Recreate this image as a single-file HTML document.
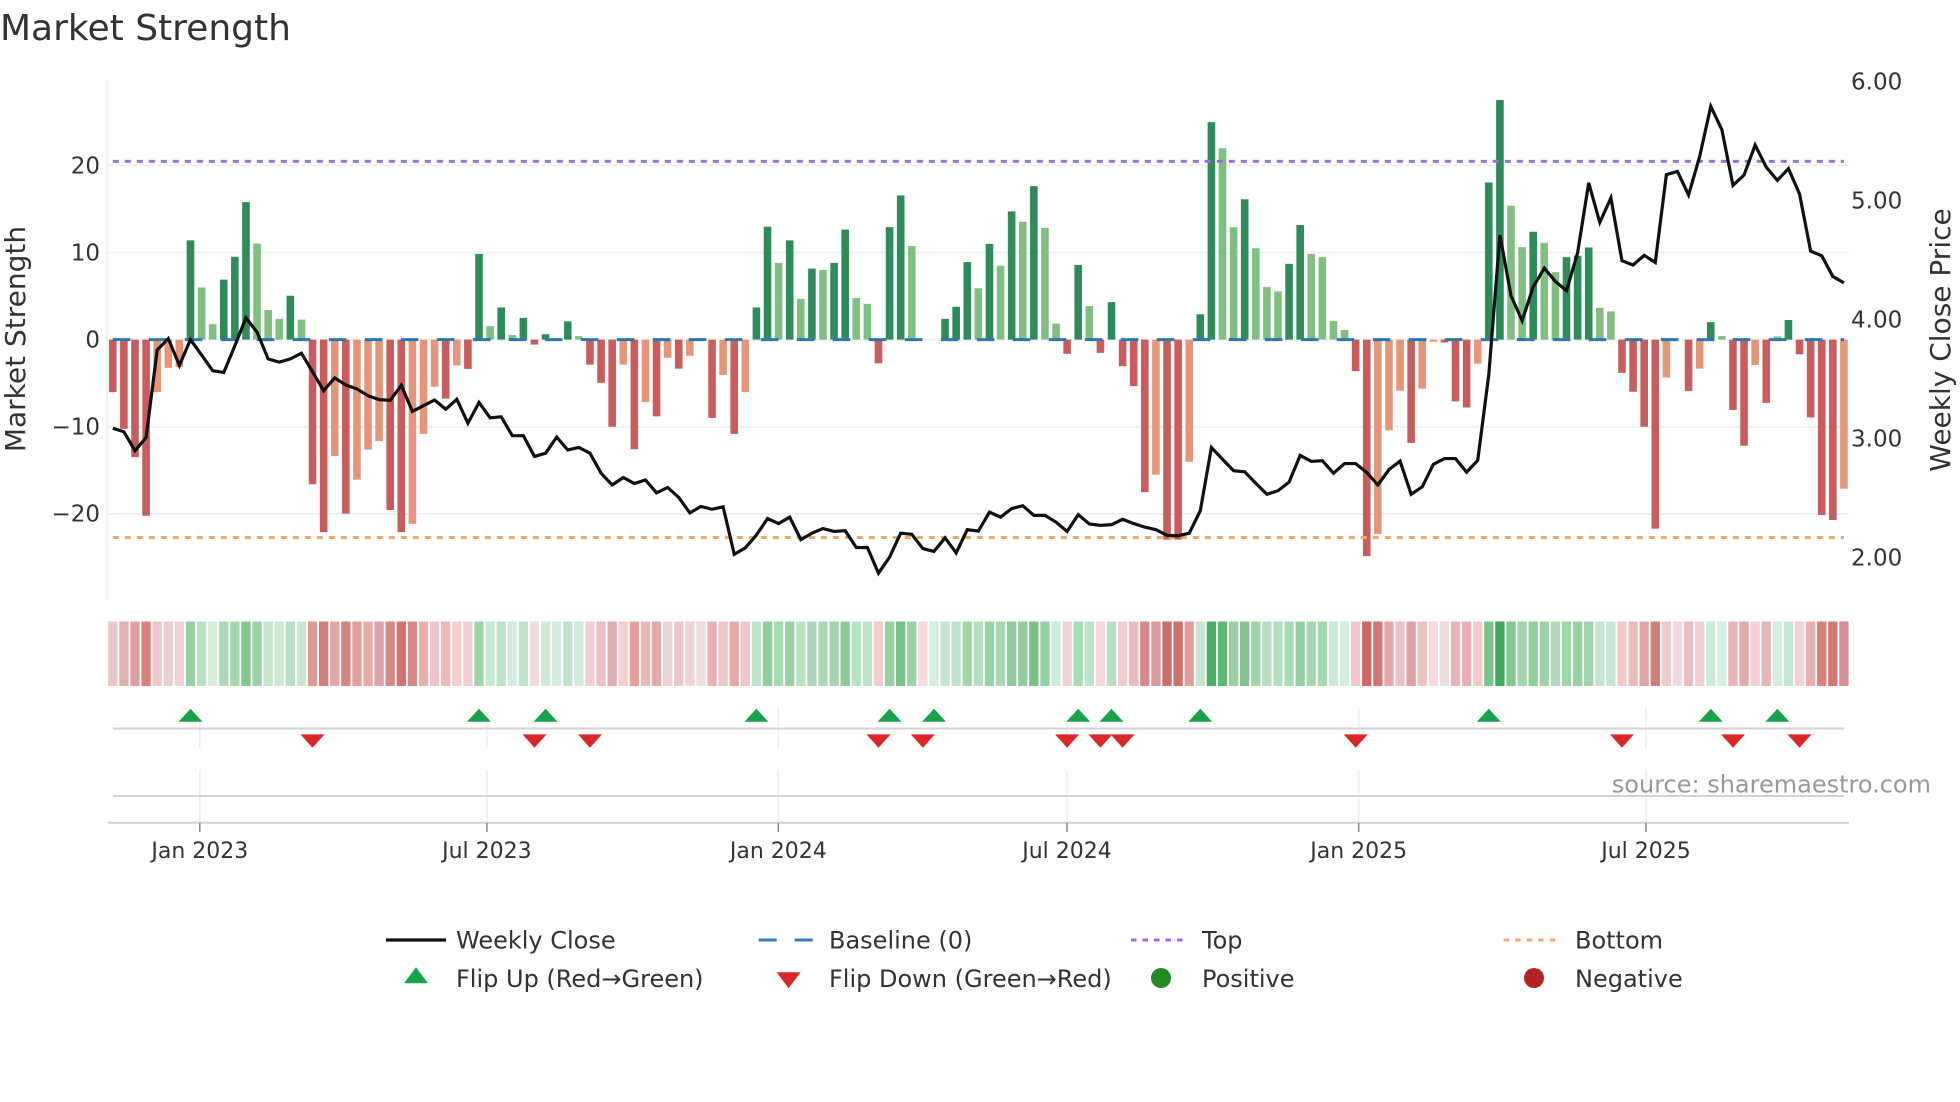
<!DOCTYPE html>
<html lang="en">
<head>
<meta charset="utf-8">
<title>Market Strength</title>
<style>
html,body{margin:0;padding:0;background:#fff}
svg{display:block}
text{font-family:"DejaVu Sans","Liberation Sans",sans-serif;fill:#333}
.b{fill:none;stroke-width:7.6;vector-effect:non-scaling-stroke}
.h rect{width:.84px;height:64.5px}
</style>
</head>
<body>
<svg width="1960" height="1102" viewBox="0 0 1960 1102" xmlns="http://www.w3.org/2000/svg">
<rect width="1960" height="1102" fill="#fff"/>
<text x="0" y="40" font-size="36">Market Strength</text>

<!-- grid -->
<g stroke="#f0f1f4" stroke-width="2" fill="none">
<path d="M107 165.4H1849M107 252.5H1849M107 339.6H1849M107 426.8H1849M107 513.9H1849"/>
</g>
<path d="M107 80V600" stroke="#eeeeee" stroke-width="1.5"/>

<!-- bars -->
<g transform="matrix(11.097 0 0 .35714 112.8 60)">
<path class="b" stroke="#c95c5c" d="M0 783V930M1 783V1033M2 783V1112M3 783V1276M18 783V1188M19 783V1322M21 783V1270M25 783V1260M26 783V1322M30 783V948M32 783V865M38 783V797M43 783V853M44 783V904M45 783V1027M47 783V1090M49 783V998M51 783V864M54 783V1002M56 783V1047M69 783V849M86 783V823M89 783V820M91 783V857M92 783V913M93 783V1210M95 783V1343M96 783V1343M112 783V871M113 783V1389M117 783V1072M120 783V791M121 783V956M122 783V973M136 783V876M137 783V929M138 783V1027M139 783V1312M142 783V927M146 783V980M147 783V1080M149 783V960M152 783V824M153 783V1001M154 783V1274M155 783V1288"/>
<path class="b" stroke="#e59679" d="M4 783V930M5 783V862M6 783V860M20 783V1109M22 783V1175M23 783V1091M24 783V1067M27 783V1299M28 783V1047M29 783V915M31 783V855M46 783V853M48 783V958M50 783V834M52 783V828M55 783V882M57 783V930M94 783V1161M97 783V1125M114 783V1327M115 783V1037M116 783V926M118 783V920M119 783V789M123 783V850M140 783V889M143 783V864M148 783V854M156 783V1200"/>
<path class="b" stroke="#2f8c5a" d="M7 783V505M10 783V615M11 783V551M12 783V398M16 783V660M33 783V543M35 783V693M37 783V722M39 783V768M41 783V732M58 783V693M59 783V467M61 783V505M63 783V584M65 783V568M66 783V475M70 783V468M71 783V379M75 783V725M76 783V691M77 783V566M79 783V515M81 783V424M83 783V353M87 783V574M90 783V678M98 783V712M99 783V174M102 783V390M106 783V571M107 783V462M124 783V343M125 783V112M128 783V481M131 783V552M132 783V548M133 783V525M144 783V734M151 783V728"/>
<path class="b" stroke="#80bf80" d="M8 783V637M9 783V740M13 783V514M14 783V700M15 783V725M17 783V727M34 783V745M36 783V770M42 783V773M60 783V568M62 783V669M64 783V588M67 783V666M68 783V683M72 783V521M78 783V639M80 783V576M82 783V453M84 783V470M85 783V738M88 783V689M100 783V247M101 783V468M103 783V527M104 783V636M105 783V648M108 783V543M109 783V552M110 783V731M111 783V756M126 783V408M127 783V524M129 783V512M130 783V594M134 783V694M135 783V704M145 783V773M150 783V774"/>
</g>

<!-- reference lines -->
<path d="M112.8 339.6H1844" stroke="#2a78ad" stroke-width="3" stroke-dasharray="17.6 18.4" fill="none"/>
<path d="M112.8 161.4H1844" stroke="#9b6fd6" stroke-width="3" stroke-dasharray="6 6" fill="none"/>
<path d="M112.8 537.5H1844" stroke="#f0a868" stroke-width="3" stroke-dasharray="6 6" fill="none"/>

<!-- weekly close -->
<g transform="matrix(11.097 0 0 .35714 112.8 60)">
<polyline fill="none" stroke="#111" stroke-width="3.2" stroke-linejoin="miter" vector-effect="non-scaling-stroke" points="0,1031 1,1041 2,1094 3,1057 4,812 5,780 6,855 7,783 8,826 9,870 10,875 11,800 12,722 13,762 14,837 15,846 16,837 17,821 18,873 19,926 20,890 21,910 22,921 23,940 24,951 25,953 26,911 27,984 28,968 29,952 30,978 31,950 32,1017 33,959 34,1002 35,999 36,1052 37,1052 38,1110 39,1101 40,1056 41,1092 42,1085 43,1101 44,1157 45,1190 46,1169 47,1186 48,1176 49,1212 50,1197 51,1225 52,1268 53,1250 54,1258 55,1251 56,1384 57,1366 58,1330 59,1284 60,1298 61,1280 62,1343 63,1325 64,1312 65,1320 66,1318 67,1365 68,1365 69,1437 70,1392 71,1325 72,1328 73,1368 74,1376 75,1338 76,1380 77,1315 78,1319 79,1266 80,1280 81,1256 82,1248 83,1275 84,1275 85,1294 86,1320 87,1273 88,1299 89,1303 90,1301 91,1286 92,1298 93,1308 94,1315 95,1331 96,1332 97,1325 98,1262 99,1085 100,1118 101,1150 102,1153 103,1185 104,1216 105,1206 106,1182 107,1107 108,1124 109,1122 110,1157 111,1130 112,1130 113,1155 114,1190 115,1147 116,1123 117,1216 118,1195 119,1132 120,1116 121,1116 122,1154 123,1121 124,880 125,490 126,660 127,730 128,635 129,583 130,620 131,646 132,540 133,344 134,455 135,386 136,562 137,574 138,547 139,567 140,321 141,312 142,378 143,270 144,130 145,195 146,351 147,322 148,238 149,300 150,337 151,304 152,375 153,535 154,548 155,606 156,624"/>
</g>

<!-- axis labels -->
<g font-size="23" text-anchor="end">
<text x="100" y="173.5">20</text>
<text x="100" y="260.5">10</text>
<text x="100" y="347.5">0</text>
<text x="100" y="434.5">−10</text>
<text x="100" y="521.5">−20</text>
</g>
<g font-size="23">
<text x="1851" y="89.5">6.00</text>
<text x="1851" y="208.5">5.00</text>
<text x="1851" y="327.5">4.00</text>
<text x="1851" y="446.5">3.00</text>
<text x="1851" y="565.5">2.00</text>
</g>
<text transform="translate(25 339) rotate(-90)" font-size="28" text-anchor="middle">Market Strength</text>
<text transform="translate(1950 340) rotate(-90)" font-size="28" text-anchor="middle">Weekly Close Price</text>

<!-- heat strip -->
<g class="h" transform="matrix(11.097 0 0 1 108.14 621.5)">
<rect x="0" fill="#ebc8c8"/><rect x="1" fill="#e2b0ae"/><rect x="2" fill="#e0a0a0"/><rect x="3" fill="#d9807a"/><rect x="4" fill="#f0c8cc"/><rect x="5" fill="#ecd0d0"/><rect x="6" fill="#f2d2d6"/><rect x="7" fill="#96cfa2"/><rect x="8" fill="#b8e0c2"/><rect x="9" fill="#d5efdb"/>
<rect x="10" fill="#add9b8"/><rect x="11" fill="#a5d8b0"/><rect x="12" fill="#7ec88a"/><rect x="13" fill="#9bd3a8"/><rect x="14" fill="#c4e6cb"/><rect x="15" fill="#cdebd2"/><rect x="16" fill="#b9dfc2"/><rect x="17" fill="#c8e8d0"/><rect x="18" fill="#de9a95"/><rect x="19" fill="#cc7f7d"/>
<rect x="20" fill="#e3a8a6"/><rect x="21" fill="#d9827f"/><rect x="22" fill="#e29f9d"/><rect x="23" fill="#e8aba5"/><rect x="24" fill="#dba4aa"/><rect x="25" fill="#d98a88"/><rect x="26" fill="#d3726f"/><rect x="27" fill="#d68887"/><rect x="28" fill="#e8b0aa"/><rect x="29" fill="#edc5c8"/>
<rect x="30" fill="#ecb9b9"/><rect x="31" fill="#efd0cc"/><rect x="32" fill="#f0ced2"/><rect x="33" fill="#9dd4a8"/><rect x="34" fill="#c8e9d2"/><rect x="35" fill="#bde4c8"/><rect x="36" fill="#d2ece0"/><rect x="37" fill="#c0e5cc"/><rect x="38" fill="#f4dcde"/><rect x="39" fill="#d0ecd8"/>
<rect x="40" fill="#d5ece0"/><rect x="41" fill="#bfe3c6"/><rect x="42" fill="#d2ebdc"/><rect x="43" fill="#f2cfd3"/><rect x="44" fill="#eac2c2"/><rect x="45" fill="#e2adaf"/><rect x="46" fill="#f3d0d0"/><rect x="47" fill="#e59f99"/><rect x="48" fill="#eeb6b6"/><rect x="49" fill="#e4aaaa"/>
<rect x="50" fill="#f1d4d2"/><rect x="51" fill="#eec8c8"/><rect x="52" fill="#f2d5d7"/><rect x="53" fill="#f0dedc"/><rect x="54" fill="#ecb2b2"/><rect x="55" fill="#ecc8c8"/><rect x="56" fill="#e8a8a8"/><rect x="57" fill="#f2c4c4"/><rect x="58" fill="#c0e4cc"/><rect x="59" fill="#8ecf9e"/>
<rect x="60" fill="#a8dab4"/><rect x="61" fill="#98d2a6"/><rect x="62" fill="#b8e2c0"/><rect x="63" fill="#aed4bb"/><rect x="64" fill="#a8d9b4"/><rect x="65" fill="#a2d6ae"/><rect x="66" fill="#8ccb98"/><rect x="67" fill="#b8e2c0"/><rect x="68" fill="#bfe4cc"/><rect x="69" fill="#f0cece"/>
<rect x="70" fill="#96cfa0"/><rect x="71" fill="#78c288"/><rect x="72" fill="#9bd3a6"/><rect x="73" fill="#f6dbe0"/><rect x="74" fill="#d4eedd"/><rect x="75" fill="#c6e6d0"/><rect x="76" fill="#c0e3cc"/><rect x="77" fill="#a0d9a8"/><rect x="78" fill="#b4dec2"/><rect x="79" fill="#98d3a6"/>
<rect x="80" fill="#a8d8b2"/><rect x="81" fill="#8aca9c"/><rect x="82" fill="#92cd9e"/><rect x="83" fill="#76c285"/><rect x="84" fill="#94d0a2"/><rect x="85" fill="#cdeedc"/><rect x="86" fill="#f4d2d6"/><rect x="87" fill="#a8dcb6"/><rect x="88" fill="#bce5cc"/><rect x="89" fill="#f3d8dc"/>
<rect x="90" fill="#b6e0c2"/><rect x="91" fill="#f0cece"/><rect x="92" fill="#edbcbc"/><rect x="93" fill="#d9878a"/><rect x="94" fill="#d99a9e"/><rect x="95" fill="#cc6e6c"/><rect x="96" fill="#d0706a"/><rect x="97" fill="#e29c9c"/><rect x="98" fill="#c8e4d0"/><rect x="99" fill="#4cad66"/>
<rect x="100" fill="#5fb974"/><rect x="101" fill="#96d0a2"/><rect x="102" fill="#82c490"/><rect x="103" fill="#a0d6aa"/><rect x="104" fill="#b4dfc0"/><rect x="105" fill="#b6dfc0"/><rect x="106" fill="#aadbb4"/><rect x="107" fill="#94d0a4"/><rect x="108" fill="#a8d8b2"/><rect x="109" fill="#a4d8b0"/>
<rect x="110" fill="#ccebd6"/><rect x="111" fill="#d4eee0"/><rect x="112" fill="#f0c8cc"/><rect x="113" fill="#cb6a65"/><rect x="114" fill="#d07572"/><rect x="115" fill="#e5a8aa"/><rect x="116" fill="#ecc0c4"/><rect x="117" fill="#e0a0a4"/><rect x="118" fill="#ecc4bf"/><rect x="119" fill="#f4dcdc"/>
<rect x="120" fill="#ecdcdc"/><rect x="121" fill="#e8b4b8"/><rect x="122" fill="#eab0b4"/><rect x="123" fill="#f2cacc"/><rect x="124" fill="#78c68a"/><rect x="125" fill="#3ea85c"/><rect x="126" fill="#82c790"/><rect x="127" fill="#a2d6ac"/><rect x="128" fill="#90d09a"/><rect x="129" fill="#9fd4aa"/>
<rect x="130" fill="#b4d8bc"/><rect x="131" fill="#9dd6a8"/><rect x="132" fill="#98d2a4"/><rect x="133" fill="#a0d4ac"/><rect x="134" fill="#c6e6d0"/><rect x="135" fill="#c8e6d4"/><rect x="136" fill="#eecac8"/><rect x="137" fill="#ebbcbc"/><rect x="138" fill="#e0a6a8"/><rect x="139" fill="#d27d78"/>
<rect x="140" fill="#efc8c8"/><rect x="141" fill="#f4dade"/><rect x="142" fill="#ebbcc0"/><rect x="143" fill="#f0d0d0"/><rect x="144" fill="#cdecd6"/><rect x="145" fill="#d6efe2"/><rect x="146" fill="#ebb4b8"/><rect x="147" fill="#e6a8a8"/><rect x="148" fill="#f2d2d4"/><rect x="149" fill="#e8b8b8"/>
<rect x="150" fill="#d4f0dc"/><rect x="151" fill="#c4e9d2"/><rect x="152" fill="#f4d2d6"/><rect x="153" fill="#e8b0b0"/><rect x="154" fill="#d98078"/><rect x="155" fill="#d07a74"/><rect x="156" fill="#d89090"/>
</g>

<!-- lower panel lines -->
<g stroke="#eceef1" stroke-width="1.5" fill="none">
<path d="M199.8 722V748M199.8 770V823M486.9 722V748M486.9 770V823M778.3 708V748M778.3 770V823M1067 722V748M1067 770V823M1358.7 708V748M1358.7 770V823M1646 708V748M1646 770V823"/>
</g>
<g stroke="#d2d3d6" stroke-width="2" fill="none">
<path d="M112.8 728.5H1844M112.8 796H1844M108 822.7H1849"/>
</g>
<g stroke="#888" stroke-width="1.5" fill="none">
<path d="M199.8 823V832M486.9 823V832M778.3 823V832M1067 823V832M1358.7 823V832M1646 823V832"/>
</g>

<!-- flip markers -->
<g fill="#16a34a">
<path d="M178.5 721.7L190.5 708.7L202.5 721.7Z"/>
<path d="M467 721.7L479 708.7L491 721.7Z"/>
<path d="M533.6 721.7L545.6 708.7L557.6 721.7Z"/>
<path d="M744.4 721.7L756.4 708.7L768.4 721.7Z"/>
<path d="M877.6 721.7L889.6 708.7L901.6 721.7Z"/>
<path d="M922 721.7L934 708.7L946 721.7Z"/>
<path d="M1066.2 721.7L1078.2 708.7L1090.2 721.7Z"/>
<path d="M1099.5 721.7L1111.5 708.7L1123.5 721.7Z"/>
<path d="M1188.3 721.7L1200.3 708.7L1212.3 721.7Z"/>
<path d="M1476.8 721.7L1488.8 708.7L1500.8 721.7Z"/>
<path d="M1698.8 721.7L1710.8 708.7L1722.8 721.7Z"/>
<path d="M1765.4 721.7L1777.4 708.7L1789.4 721.7Z"/>
</g>
<g fill="#dc2626">
<path d="M300.5 734.4L324.5 734.4L312.5 747.7Z"/>
<path d="M522.5 734.4L546.5 734.4L534.5 747.7Z"/>
<path d="M578 734.4L602 734.4L590 747.7Z"/>
<path d="M866.5 734.4L890.5 734.4L878.5 747.7Z"/>
<path d="M910.9 734.4L934.9 734.4L922.9 747.7Z"/>
<path d="M1055.1 734.4L1079.1 734.4L1067.1 747.7Z"/>
<path d="M1088.4 734.4L1112.4 734.4L1100.4 747.7Z"/>
<path d="M1110.6 734.4L1134.6 734.4L1122.6 747.7Z"/>
<path d="M1343.7 734.4L1367.7 734.4L1355.7 747.7Z"/>
<path d="M1610 734.4L1634 734.4L1622 747.7Z"/>
<path d="M1721 734.4L1745 734.4L1733 747.7Z"/>
<path d="M1787.5 734.4L1811.5 734.4L1799.5 747.7Z"/>
</g>

<text x="1931" y="792.5" font-size="24" text-anchor="end" style="fill:#999">source: sharemaestro.com</text>

<!-- x labels -->
<g font-size="22" text-anchor="middle">
<text x="199.8" y="858">Jan 2023</text>
<text x="486.9" y="858">Jul 2023</text>
<text x="778.3" y="858">Jan 2024</text>
<text x="1067" y="858">Jul 2024</text>
<text x="1358.7" y="858">Jan 2025</text>
<text x="1646" y="858">Jul 2025</text>
</g>

<!-- legend -->
<path d="M386 940H446" stroke="#111" stroke-width="3.2" fill="none"/>
<path d="M758.7 940H812.7" stroke="#2f7fb6" stroke-width="3" stroke-dasharray="18 18" fill="none"/>
<path d="M1131 940H1186" stroke="#a866e0" stroke-width="3" stroke-dasharray="5.5 6" fill="none"/>
<path d="M1503.7 940H1558.7" stroke="#f2ab78" stroke-width="3" stroke-dasharray="5.5 6" fill="none"/>
<path d="M404 983.3L416 967.3L428 983.3Z" fill="#16a34a"/>
<path d="M776.6 972.3L800.6 972.3L788.6 988.3Z" fill="#dc2626"/>
<circle cx="1161" cy="978" r="10" fill="#228b22"/>
<circle cx="1534" cy="978" r="10" fill="#b22222"/>
<g font-size="24">
<text x="456" y="948.5">Weekly Close</text>
<text x="829" y="948.5">Baseline (0)</text>
<text x="1202" y="948.5">Top</text>
<text x="1575" y="948.5">Bottom</text>
<text x="456" y="987">Flip Up (Red→Green)</text>
<text x="829" y="987">Flip Down (Green→Red)</text>
<text x="1202" y="987">Positive</text>
<text x="1575" y="987">Negative</text>
</g>
</svg>
</body>
</html>
